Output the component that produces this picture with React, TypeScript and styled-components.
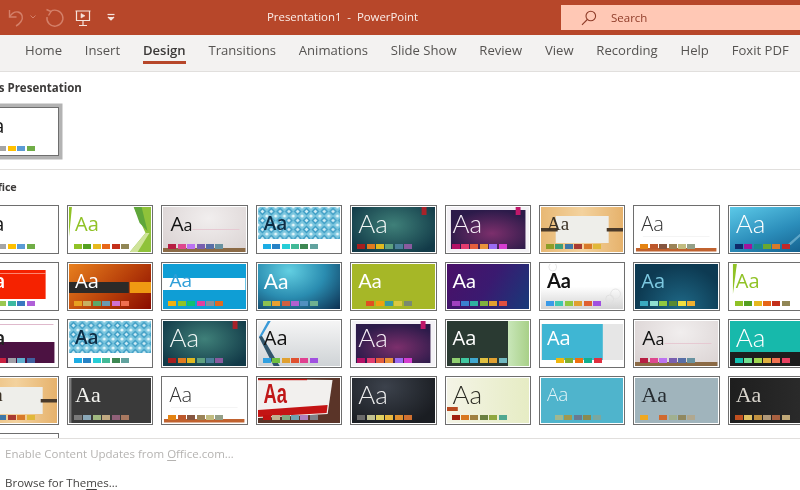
import React from "react";
import styled, { createGlobalStyle } from "styled-components";

const Global = createGlobalStyle`
  html, body { margin: 0; padding: 0; background: #fff; }
  body { font-family: "Open Sans", "Noto Sans", sans-serif; }
`;

const Page = styled.div`
  width: 800px;
  height: 490px;
  overflow: hidden;
  display: flex;
  flex-direction: column;
  background: #fff;
  filter: blur(0.3px);
`;

const TitleBar = styled.header`
  height: 35px;
  flex: none;
  display: flex;
  background: #b7472a;
`;

const Quick = styled.div`
  width: 267px;
  flex: none;
  display: flex;
  align-items: flex-start;
`;

const Title = styled.div`
  width: 294px;
  flex: none;
  color: #fbeee9;
  font-size: 11.4px;
  line-height: 33px;
  white-space: pre;
`;

const SearchBox = styled.div`
  flex: 1;
  height: 25px;
  margin-top: 5px;
  display: flex;
  align-items: center;
  gap: 14px;
  padding-left: 20px;
  background: #ffc8b5;
  color: #8e3b28;
  font-size: 11.5px;
`;

const Tabs = styled.nav`
  height: 36px;
  flex: none;
  display: flex;
  gap: 22.8px;
  padding-left: 25px;
  background: #f3f2f1;
  border-bottom: 1.5px solid #e1dfdd;
`;

const Tab = styled.div<{ $active?: boolean }>`
  height: 26px;
  line-height: 30px;
  white-space: nowrap;
  font-size: 13.1px;
  font-weight: ${(p) => (p.$active ? 600 : 400)};
  color: ${(p) => (p.$active ? "#3c3a39" : "#555351")};
  border-bottom: ${(p) => (p.$active ? "3px solid #b7472a" : "3px solid transparent")};
`;

const Section = styled.section<{ $grow?: boolean }>`
  flex: ${(p) => (p.$grow ? "1" : "none")};
  min-height: 0;
  overflow: hidden;
`;

const Current = styled(Section)`
  height: 97px;
  border-bottom: 1px solid #e1dfdd;
`;

const Heading = styled.h3`
  margin: 0 0 0 -19px;
  height: 32px;
  line-height: 32px;
  font-size: 11.5px;
  font-weight: 700;
  color: #3c3a39;
  white-space: nowrap;
`;

const Gallery = styled.div`
  display: grid;
  grid-template-columns: repeat(9, 86.4px);
  grid-auto-rows: 49px;
  gap: 8px;
  margin-left: -27.4px;
  width: 900px;
`;

const Office = styled(Section)`
  height: 268px;
  padding-top: 0;
`;

const OfficeHeading = styled(Heading)`
  height: 35px;
  line-height: 34px;
  margin-left: -14.5px;
  font-size: 10.8px;
  letter-spacing: -0.2px;
`;

const Card = styled.div<{ $selected?: boolean }>`
  position: relative;
  overflow: hidden;
  box-sizing: border-box;
  border: 1px solid #6e6e6e;
  padding: 1px;
  background: #fff;
  ${(p) => (p.$selected ? "box-shadow: 0 0 0 3.5px #b3b3b3;" : "")}
`;

const SelectedWrap = styled.div`
  margin: 3px 0 0 -27.4px;
  width: 86.4px;
  height: 49px;
  padding: 0;
  display: grid;
  overflow: visible;
`;

const Thumb = styled.div<{ $bg: string }>`
  position: relative;
  width: 100%;
  height: 100%;
  overflow: hidden;
  background: ${(p) => p.$bg};
  display: flex;
  flex-direction: column;
  filter: blur(0.35px);
`;

const Art = styled.svg`
  position: absolute;
  inset: 0;
  width: 100%;
  height: 100%;
`;

const Sample = styled.div<{ $color: string; $font: string; $size: number; $weight: number; $left: number; $big?: boolean; $squeeze?: boolean }>`
  position: relative;
  flex: none;
  height: 36px;
  line-height: 33px;
  padding-left: ${(p) => p.$left}px;
  color: ${(p) => p.$color};
  font-family: ${(p) => p.$font};
  font-size: ${(p) => p.$size}px;
  font-weight: ${(p) => p.$weight};
  ${(p) => (p.$squeeze ? "transform: scaleX(0.68); transform-origin: 0 50%;" : "")}
  ${(p) => (p.$big ? "&::first-letter { font-size: 1.3em; }" : "")}
`;

const Swatches = styled.div<{ $left: number }>`
  position: relative;
  display: flex;
  gap: 1.4px;
  margin: 1px 0 0 ${(p) => p.$left}px;
`;

const Swatch = styled.i<{ $c: string }>`
  display: block;
  flex: none;
  width: 8px;
  height: 5px;
  background: ${(p) => p.$c};
`;

const Footer = styled.footer`
  flex: 1;
  border-top: 1px solid #e1dfdd;
  padding-left: 5px;
`;

const MenuLine = styled.div<{ $disabled?: boolean }>`
  height: 29px;
  line-height: 30px;
  font-size: 11.5px;
  color: ${(p) => (p.$disabled ? "#b5b3b1" : "#444342")};
  u { text-underline-offset: 2px; }
`;

const SANS = `"Open Sans", sans-serif`;
const LIGHT = `Lato, sans-serif`;
const SERIF = `"Liberation Serif", serif`;
const NARROW = `"Liberation Sans", sans-serif`;

type Theme = {
  bg: string;
  color: string;
  font?: string;
  size?: number;
  weight?: number;
  left?: number;
  big?: boolean;
  squeeze?: boolean;
  art?: React.ReactNode;
  swatches: string[];
  swLeft?: number;
};

const T: Record<string, Theme> = {
  office: {
    bg: "#fff", color: "#1a1a1a", weight: 400,
    swatches: ["#4472c4", "#ed7d31", "#a5a5a5", "#ffc000", "#5b9bd5", "#70ad47"],
  },
  facet: {
    bg: "#fff", color: "#90c226",
    art: (
      <>
        <polygon points="0,0 3,0 0,30" fill="#90c226" />
        <polygon points="66,0 84,0 84,45 62,45 78,26" fill="#8fc23a" />
        <polygon points="66,0 74,0 80,24 72,16" fill="#5fa63a" />
        <polygon points="78,26 62,45 70,45 82,26" fill="#cfe39a" />
      </>
    ),
    swatches: ["#90c226", "#54a021", "#e6b91e", "#e76618", "#c42f1a", "#918655"],
  },
  gallery: {
    bg: "radial-gradient(ellipse at 55% 25%, #f1eeee, #d8d0d0)", color: "#111", weight: 500, big: true, size: 16, left: 7,
    art: (
      <>
        <rect x="30" y="22" width="48" height="1" fill="#e6c9d2" />
        <rect x="0" y="41" width="84" height="4" fill="#8b6a45" />
      </>
    ),
    swatches: ["#b71e42", "#de478e", "#bc72f0", "#795faf", "#586ea6", "#6892a0"],
  },
  pattern: {
    bg: "#fff", color: "#0c2c44", weight: 600, size: 19,
    art: (
      <>
        <defs>
          <pattern id="dm" width="9" height="9" patternUnits="userSpaceOnUse">
            <rect width="9" height="9" fill="#7cc6de" />
            <polygon points="4.5,0.5 8.5,4.5 4.5,8.5 0.5,4.5" fill="#3c9cc4" />
            <polygon points="4.5,2.5 6.5,4.5 4.5,6.5 2.5,4.5" fill="#cfecf5" />
            <circle cx="0" cy="0" r="1.6" fill="#e4f6fb" />
            <circle cx="9" cy="0" r="1.6" fill="#e4f6fb" />
            <circle cx="0" cy="9" r="1.6" fill="#e4f6fb" />
            <circle cx="9" cy="9" r="1.6" fill="#e4f6fb" />
          </pattern>
        </defs>
        <rect width="84" height="32" fill="url(#dm)" />
      </>
    ),
    swatches: ["#1cade4", "#2683c6", "#27ced7", "#42ba97", "#3e8853", "#62a39f"],
  },
  teal: {
    bg: "radial-gradient(ellipse at 50% 40%, #3f8079, #123a48 85%)", color: "#f0f6f5", font: LIGHT, weight: 300, size: 26,
    art: <rect x="71" y="0" width="5" height="8" fill="#a8232a" />,
    swatches: ["#a71e1e", "#e07a1f", "#e0b91f", "#5ea07f", "#4a7f9a", "#8a5a9e"],
  },
  purple: {
    bg: "#f4f2f6", color: "#f6eef6", font: LIGHT, weight: 300, size: 26,
    art: (
      <>
        <defs>
          <radialGradient id="pg" cx="0.55" cy="0.6" r="0.6">
            <stop offset="0" stopColor="#7c2f6c" />
            <stop offset="1" stopColor="#2c1b4a" />
          </radialGradient>
        </defs>
        <rect x="4" y="3" width="76" height="39" fill="url(#pg)" />
        <rect x="70" y="0" width="5" height="8" fill="#c0186a" />
      </>
    ),
    swatches: ["#b31166", "#e33d6f", "#e45f3c", "#e9943a", "#9b6bf2", "#d53dd0"],
  },
  wood: {
    bg: "linear-gradient(90deg, #e8b874, #f3d29e 50%, #e6b26c)", color: "#3b3226", font: SERIF, size: 19,
    art: (
      <>
        <rect x="15" y="9" width="54" height="27" fill="#eeeeea" />
        <rect x="0" y="21" width="17" height="3.5" fill="#4a3a2a" />
        <rect x="67" y="21" width="17" height="3.5" fill="#4a3a2a" />
      </>
    ),
    swatches: ["#8e9e28", "#3d9e78", "#3e77a8", "#a83a32", "#d87a2a", "#e0b83a"],
  },
  plain: {
    bg: "#fff", color: "#333", weight: 300, size: 20,
    art: (
      <>
        <rect x="8" y="29" width="68" height="0.5" fill="#e8e8e8" />
        <rect x="1" y="41" width="82" height="3.5" fill="#c0622f" />
      </>
    ),
    swatches: ["#e48312", "#bd582c", "#865640", "#9b8357", "#c2bc80", "#94a088"],
  },
  blue: {
    bg: "linear-gradient(160deg, #5cc9e8, #2b8dba 55%, #125c8a)", color: "#fff", font: LIGHT, weight: 300, size: 26,
    art: <polygon points="58,38 84,16 84,18 62,38" fill="#9fd6ea" opacity="0.5" />,
    swatches: ["#0f2a6a", "#a0159c", "#1a8a8a", "#6aa830", "#d87a2a", "#c0282a"],
  },
  red: {
    bg: "#fff", color: "#fff", weight: 600,
    art: (
      <>
        <rect x="0" y="6" width="72" height="29" fill="#f52200" />
        <rect x="0" y="9" width="72" height="0.7" fill="#ffb0a0" />
      </>
    ),
    swatches: ["#e8a020", "#f0c020", "#9ac850", "#3cb8a0", "#3a78c0", "#b060d8"],
  },
  orange: {
    bg: "linear-gradient(135deg, #e8801e, #b8400a 55%, #8a0c00)", color: "#fff", weight: 500,
    art: (
      <>
        <rect x="0" y="18" width="61" height="11" fill="#2c2a28" />
        <rect x="62" y="18" width="22" height="11" fill="#ef9a12" />
      </>
    ),
    swatches: ["#e8a020", "#c8b060", "#5ca868", "#6a9ab0", "#d070d0", "#f07050"],
  },
  stripes: {
    bg: "#0f9ed5", color: "#2f9fd8", weight: 500, size: 19,
    art: <rect x="0" y="14" width="84" height="12" fill="#fff" />,
    swatches: ["#f0b010", "#90c226", "#10c070", "#e040a0", "#888f9a", "#e06a20"],
  },
  cyan: {
    bg: "radial-gradient(ellipse at 38% 15%, #62cfe2, #2a8cb0 50%, #0d2f50)", color: "#fff", font: LIGHT, weight: 400, size: 21,
    swatches: ["#8cc050", "#e8a030", "#d06040", "#b060d0", "#5090c0", "#70b090"],
  },
  olive: {
    bg: "#a6b727", color: "#fff", font: LIGHT, size: 20, weight: 400,
    swLeft: 14,
    swatches: ["#e05020", "#f0a010", "#3a9aa0", "#dcc840", "#7a8a70"],
  },
  violet: {
    bg: "linear-gradient(120deg, #4a1068, #3a1a70 50%, #173a7a)", color: "#fff", font: LIGHT, size: 20, weight: 400,
    swatches: ["#a040c0", "#3a80d0", "#30b0a0", "#80b040", "#e0a030", "#e05040"],
  },
  bubble: {
    bg: "linear-gradient(180deg, #fff 50%, #d4d4d4)", color: "#111", font: LIGHT, size: 20, weight: 700,
    art: (
      <>
        <circle cx="76" cy="30" r="5" fill="none" stroke="#e4e4e4" />
        <circle cx="70" cy="35" r="4" fill="none" stroke="#e0e0e0" />
        <circle cx="12" cy="3" r="4" fill="none" stroke="#e8e8e8" />
      </>
    ),
    swatches: ["#3a9ae8", "#40c8b0", "#90c840", "#e0a030", "#e06030", "#a050e0"],
  },
  navy: {
    bg: "radial-gradient(ellipse at 55% 100%, #1f6a88, #0d3a52 70%)", color: "#7cc8e0", size: 20, weight: 400,
    swatches: ["#3aaac0", "#90e0d0", "#90c840", "#5a8a30", "#f0e040", "#f0b030"],
  },
  facet2: {
    bg: "#fff", color: "#90c226",
    art: (
      <>
        <polygon points="3,0 7,0 3,30" fill="#90c226" />
        <polygon points="76,0 84,0 84,45 74,45 84,26" fill="#7fb52e" />
      </>
    ),
    swatches: ["#90c226", "#54a021", "#e6b91e", "#e76618", "#c42f1a", "#918655"],
  },
  berlin: {
    bg: "#fff", color: "#222", weight: 600,
    art: (
      <>
        <rect x="0" y="21" width="81" height="21" fill="#4c1242" />
        <rect x="20" y="3" width="60" height="0.8" fill="#d8a8c0" />
      </>
    ),
    swatches: ["#7a2a5a", "#a03060", "#c82040", "#a0a0a8", "#60b0d0", "#4060a0"],
  },
  slant: {
    bg: "linear-gradient(180deg, #f5f5f5, #cfd3d6)", color: "#111", weight: 500,
    art: (
      <>
        <polygon points="10,0 13,0 4,15 22,45 16,45 1,16" fill="#3a9ad8" />
        <polygon points="4,15 1,16 16,45 22,45" fill="#2f2f2f" opacity="0.65" />
      </>
    ),
    swatches: ["#30a0e0", "#70c040", "#e0a030", "#e05030", "#e04090", "#a050e0"],
  },
  forest: {
    bg: "linear-gradient(90deg, #2a3a32 74%, #c8e6b8 75%, #a8d088)", color: "#fff", weight: 500,
    swatches: ["#90d070", "#40c8a0", "#40a8d0", "#e0c040", "#e0a030", "#70b8c0"],
  },
  sky: {
    bg: "#e6e6e6", color: "#fff", weight: 400,
    art: (
      <>
        <rect x="0" y="0" width="84" height="3" fill="#fff" />
        <rect x="1" y="3" width="62" height="36" fill="#3fb6d3" />
        <rect x="0" y="39" width="84" height="6" fill="#fff" />
      </>
    ),
    swLeft: 15,
    swatches: ["#f0b810", "#80b030", "#f07010", "#10b090", "#e03040"],
  },
  sea: {
    bg: "linear-gradient(180deg, #17b9ab 68%, #1d1d1d 69%)", color: "#fff", font: LIGHT, size: 26, weight: 300,
    swatches: ["#10c0b0", "#70e090", "#a0d850", "#e0b040", "#f07050", "#e84060"],
  },
  slate: {
    bg: "#3a3a3a", color: "#f2f2ee", font: SERIF, size: 22, weight: 400,
    art: <rect x="0" y="0" width="2.5" height="45" fill="#7a7a7a" />,
    swatches: ["#7a7a7a", "#8aa8b8", "#a0b880", "#c0a880", "#906078", "#a87860"],
  },
  brick: {
    bg: "#5a3428", color: "#c01818", font: NARROW, size: 27, weight: 700, squeeze: true, left: 8,
    art: (
      <>
        <polygon points="0,1 76,2 71,36 0,40" fill="#f2f0ee" />
        <rect x="0" y="1" width="50" height="1.2" fill="#c41414" />
        <polygon points="0,32 71,27 70,35 0,39" fill="#c41414" />
      </>
    ),
    swatches: ["#c01010", "#c0b090", "#80a880", "#70a0b0", "#b080c0", "#808088"],
  },
  night: {
    bg: "radial-gradient(ellipse at 40% 20%, #3c424c, #1a1d22 80%)", color: "#f0f0f0", font: LIGHT, weight: 300, size: 26,
    swatches: ["#6a6a6a", "#c0c090", "#e0d060", "#e8b840", "#e09030", "#d07030"],
  },
  cream: {
    bg: "linear-gradient(90deg, #f4f4e6, #e6ecc4)", color: "#2a2a22", font: LIGHT, weight: 300, size: 26,
    art: <rect x="0" y="29" width="11" height="4" fill="#b84a20" />,
    swatches: ["#a02010", "#d87820", "#a08040", "#6a8040", "#90a840", "#50a890"],
  },
  lagoon: {
    bg: "#4fb4cc", color: "#e4f4f8", size: 19, weight: 300,
    swLeft: 14,
    swatches: ["#a0b890", "#a09850", "#6a7a90", "#8a8a50", "#7aa8a0"],
  },
  fog: {
    bg: "#a0b4bc", color: "#262c30", font: SERIF, size: 22, weight: 400,
    swatches: ["#f0a820", "#a0b4bc", "#d06a30", "#a0b090", "#908860", "#b0a890"],
  },
  coal: {
    bg: "linear-gradient(90deg, #1e1e1e, #2c2c2c)", color: "#d8d4cc", font: SERIF, size: 22, weight: 400,
    swatches: ["#c05020", "#e0c060", "#c09040", "#b09878", "#a86040", "#c0a878"],
  },
};

const GRID: (keyof typeof T)[] = [
  "office", "facet", "gallery", "pattern", "teal", "purple", "wood", "plain", "blue",
  "red", "orange", "stripes", "cyan", "olive", "violet", "bubble", "navy", "facet2",
  "berlin", "pattern", "teal", "slant", "purple", "forest", "sky", "gallery", "sea",
  "wood", "slate", "plain", "brick", "night", "cream", "lagoon", "fog", "coal",
  "office",
];

function ThemeCard({ theme, selected }: { theme: Theme; selected?: boolean }) {
  return (
    <Card $selected={selected}>
      <Thumb $bg={theme.bg}>
        {theme.art && (
          <Art viewBox="0 0 84 45" preserveAspectRatio="none" aria-hidden="true">
            {theme.art}
          </Art>
        )}
        <Sample
          $color={theme.color}
          $font={theme.font ?? SANS}
          $size={theme.size ?? 20}
          $weight={theme.weight ?? 400}
          $left={theme.left ?? 6}
          $big={theme.big}
          $squeeze={theme.squeeze}
        >
          Aa
        </Sample>
        <Swatches $left={theme.swLeft ?? 5}>
          {theme.swatches.map((c, i) => (
            <Swatch key={i} $c={c} />
          ))}
        </Swatches>
      </Thumb>
    </Card>
  );
}

const Icon = styled.svg`
  display: block;
  flex: none;
`;

const QuickIcons = () => (
  <Icon width="125" height="35" viewBox="0 0 125 35" fill="none" aria-hidden="true">
    <g stroke="#d4806a" strokeWidth="1.4">
      <path d="M9.5 10v7h7" />
      <path d="M9.5 17C12 13 15 11.5 18 12c4.5 1 5.5 6 3 9.5-1.2 1.8-3 3.5-5 4.5" />
      <path d="M30.5 15.5l2.5 2.5 2.5-2.5" strokeWidth="1" />
      <path d="M50.5 11.5A8 8 0 1 1 47 17" />
      <path d="M46.5 9.5l4.5 2-2.5 4" />
    </g>
    <g stroke="#f6e3dc" strokeWidth="1.2">
      <path d="M75.5 11h15M76.5 11v9.5h13V11M83 20.5v4.5M79 25.5h8" />
      <path d="M81 13.5v4.5l4-2.2z" fill="#f6e3dc" strokeWidth="0.6" />
      <path d="M107.5 14.5h7" />
      <path d="M108 17l3 3 3-3" fill="#f6e3dc" />
    </g>
  </Icon>
);

const SearchIcon = () => (
  <Icon width="16" height="16" viewBox="0 0 16 16" fill="none" stroke="#8e3b28" strokeWidth="1.1" aria-hidden="true">
    <circle cx="9.8" cy="6" r="4.8" />
    <path d="M6.3 9.5L1 14.8" />
  </Icon>
);

const TABS = ["Home", "Insert", "Design", "Transitions", "Animations", "Slide Show", "Review", "View", "Recording", "Help", "Foxit PDF"];

export default function App() {
  return (
    <Page>
      <Global />
      <TitleBar>
        <Quick>
          <QuickIcons />
        </Quick>
        <Title>{"Presentation1  -  PowerPoint"}</Title>
        <SearchBox>
          <SearchIcon />
          <span>Search</span>
        </SearchBox>
      </TitleBar>
      <Tabs>
        {TABS.map((t) => (
          <Tab key={t} $active={t === "Design"}>
            {t}
          </Tab>
        ))}
      </Tabs>
      <Current>
        <Heading>This Presentation</Heading>
        <SelectedWrap>
          <ThemeCard theme={T.office} selected />
        </SelectedWrap>
      </Current>
      <Office>
        <OfficeHeading>Office</OfficeHeading>
        <Gallery>
          {GRID.map((k, i) => (
            <ThemeCard key={i} theme={T[k]} />
          ))}
        </Gallery>
      </Office>
      <Footer>
        <MenuLine $disabled>
          Enable Content Updates from <u>O</u>ffice.com…
        </MenuLine>
        <MenuLine>
          Browse for The<u>m</u>es…
        </MenuLine>
      </Footer>
    </Page>
  );
}
